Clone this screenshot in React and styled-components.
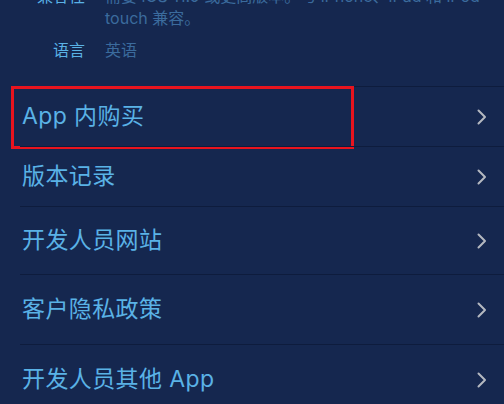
import React from 'react';
import styled, { createGlobalStyle } from 'styled-components';

const navy = '#15274f';
const rule = '#0e1c3d';
const blue = '#5ab2e6';
const dim = '#3b6b9d';
const grey = '#b4b8c0';

const GlobalStyle = createGlobalStyle`
  html, body {
    margin: 0;
    padding: 0;
    background: ${navy};
    overflow: hidden;
  }
  body {
    font-family: Inter, "Noto Sans CJK SC", sans-serif;
  }
`;

const Page = styled.div`
  width: 504px;
  height: 404px;
  overflow: hidden;
  background: ${navy};
`;

const Info = styled.dl`
  display: grid;
  grid-template-columns: 85px 1fr;
  column-gap: 20px;
  row-gap: 10px;
  margin: -15px 0 0;
  padding: 0 10px 25px 0;
  font-size: 16px;
  line-height: 22px;
`;

const Label = styled.dt`
  color: ${blue};
  text-align: right;
`;

const Value = styled.dd`
  margin: 0;
  color: ${dim};
  white-space: nowrap;
`;

const List = styled.ul`
  list-style: none;
  margin: 0;
  padding: 0 0 0 20px;
`;

const Row = styled.li`
  position: relative;
  display: flex;
  align-items: center;
  justify-content: space-between;
  height: ${p => p.$h}px;
  padding: 0 17px 0 2px;
  border-top: 1px solid ${rule};
  box-sizing: border-box;
`;

const RowText = styled.span`
  color: ${blue};
  font-size: 23px;
  letter-spacing: 0.4px;
  margin-bottom: 5px;
`;

const Highlight = styled.span`
  position: absolute;
  left: -9px;
  top: -1px;
  width: 343px;
  height: 63px;
  border: 3px solid #e8141e;
  box-sizing: border-box;
`;

const Chevron = () => (
  <svg width="10" height="16" viewBox="0 0 10 16">
    <polyline
      points="1.5,1.5 8,8 1.5,14.5"
      fill="none"
      stroke={grey}
      strokeWidth="2"
      strokeLinecap="round"
      strokeLinejoin="round"
    />
  </svg>
);

const rows = [
  { text: 'App 内购买', h: 60, marked: true },
  { text: '版本记录', h: 60 },
  { text: '开发人员网站', h: 68 },
  { text: '客户隐私政策', h: 70 },
  { text: '开发人员其他 App', h: 70 },
];

export default function App() {
  return (
    <Page>
      <GlobalStyle />
      <Info>
        <Label>兼容性</Label>
        <Value>
          需要 iOS 11.0 或更高版本。与 iPhone、iPad 和 iPod
          <br />
          touch 兼容。
        </Value>
        <Label>语言</Label>
        <Value>英语</Value>
      </Info>
      <List>
        {rows.map(r => (
          <Row key={r.text} $h={r.h}>
            {r.marked && <Highlight />}
            <RowText>{r.text}</RowText>
            <Chevron />
          </Row>
        ))}
      </List>
    </Page>
  );
}
